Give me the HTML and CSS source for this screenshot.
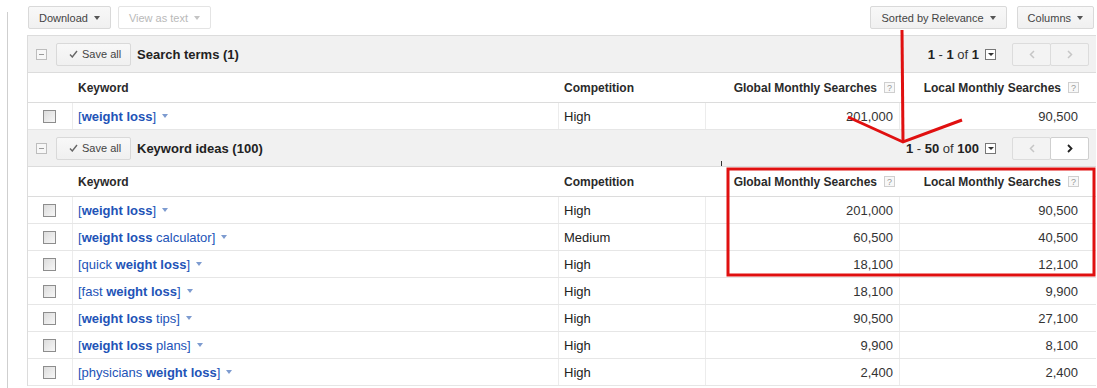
FILE: index.html
```html
<!DOCTYPE html>
<html lang="en">
<head>
<meta charset="UTF-8" />
<title>Keyword ideas</title>
<link rel="stylesheet" href="styles.css">
</head>
<body>
<div class="page">
  <div class="rail"></div>
  <div class="main">
    <!-- toolbar -->
    <div class="toolbar">
      <div class="tools">
        <button class="btn">Download <span class="caret"></span></button>
        <button class="btn off">View as text <span class="caret"></span></button>
      </div>
      <div class="tools wide">
        <button class="btn">Sorted by Relevance <span class="caret"></span></button>
        <button class="btn">Columns <span class="caret"></span></button>
      </div>
    </div>

    <div class="panel">
      <!-- search terms -->
      <div class="band">
        <span class="fold"><span></span></span>
        <button class="btn save"><svg width="9" height="8" viewBox="0 0 9 8"><path d="M1 4.5 L3.3 7 L8 1" fill="none" stroke="#666" stroke-width="1.4"/></svg>Save all</button>
        <span class="title">Search terms (1)</span>
        <div class="pager">
          <span class="count"><b>1</b> - <b>1</b> of <b>1</b></span>
          <span class="dd"></span>
          <span class="pbtn prev"><svg width="6" height="9" viewBox="0 0 6 9"><path d="M5 1 L1.5 4.5 L5 8" fill="none" stroke="#c6c6c6" stroke-width="1.5"/></svg></span>
          <span class="pbtn next"><svg width="6" height="9" viewBox="0 0 6 9"><path d="M1 1 L4.5 4.5 L1 8" fill="none" stroke="#c6c6c6" stroke-width="1.5"/></svg></span>
        </div>
      </div>
      <div class="row head">
        <div class="cell"></div>
        <div class="cell">Keyword</div>
        <div class="cell">Competition</div>
        <div class="cell num">Global Monthly Searches <span class="help">?</span></div>
        <div class="cell num last">Local Monthly Searches <span class="help">?</span></div>
      </div>
      <div class="row">
        <div class="cell"><span class="check"></span></div>
        <div class="cell"><a class="kw">[<b>weight loss</b>]</a><span class="kcaret"></span></div>
        <div class="cell">High</div>
        <div class="cell num">201,000</div>
        <div class="cell num last">90,500</div>
      </div>

      <!-- keyword ideas -->
      <div class="band">
        <span class="fold"><span></span></span>
        <button class="btn save"><svg width="9" height="8" viewBox="0 0 9 8"><path d="M1 4.5 L3.3 7 L8 1" fill="none" stroke="#666" stroke-width="1.4"/></svg>Save all</button>
        <span class="title">Keyword ideas (100)</span>
        <div class="pager">
          <span class="count"><b>1</b> - <b>50</b> of <b>100</b></span>
          <span class="dd"></span>
          <span class="pbtn prev"><svg width="6" height="9" viewBox="0 0 6 9"><path d="M5 1 L1.5 4.5 L5 8" fill="none" stroke="#c6c6c6" stroke-width="1.5"/></svg></span>
          <span class="pbtn next on"><svg width="6" height="9" viewBox="0 0 6 9"><path d="M1 1 L4.5 4.5 L1 8" fill="none" stroke="#222" stroke-width="1.8"/></svg></span>
        </div>
      </div>
      <div class="row head">
        <div class="cell"></div>
        <div class="cell">Keyword</div>
        <div class="cell">Competition</div>
        <div class="cell num">Global Monthly Searches <span class="help">?</span></div>
        <div class="cell num last">Local Monthly Searches <span class="help">?</span></div>
      </div>
      <div class="row">
        <div class="cell"><span class="check"></span></div>
        <div class="cell"><a class="kw">[<b>weight loss</b>]</a><span class="kcaret"></span></div>
        <div class="cell">High</div>
        <div class="cell num">201,000</div>
        <div class="cell num last">90,500</div>
      </div>
      <div class="row">
        <div class="cell"><span class="check"></span></div>
        <div class="cell"><a class="kw">[<b>weight loss</b> calculator]</a><span class="kcaret"></span></div>
        <div class="cell">Medium</div>
        <div class="cell num">60,500</div>
        <div class="cell num last">40,500</div>
      </div>
      <div class="row">
        <div class="cell"><span class="check"></span></div>
        <div class="cell"><a class="kw">[quick <b>weight loss</b>]</a><span class="kcaret"></span></div>
        <div class="cell">High</div>
        <div class="cell num">18,100</div>
        <div class="cell num last">12,100</div>
      </div>
      <div class="row">
        <div class="cell"><span class="check"></span></div>
        <div class="cell"><a class="kw">[fast <b>weight loss</b>]</a><span class="kcaret"></span></div>
        <div class="cell">High</div>
        <div class="cell num">18,100</div>
        <div class="cell num last">9,900</div>
      </div>
      <div class="row">
        <div class="cell"><span class="check"></span></div>
        <div class="cell"><a class="kw">[<b>weight loss</b> tips]</a><span class="kcaret"></span></div>
        <div class="cell">High</div>
        <div class="cell num">90,500</div>
        <div class="cell num last">27,100</div>
      </div>
      <div class="row">
        <div class="cell"><span class="check"></span></div>
        <div class="cell"><a class="kw">[<b>weight loss</b> plans]</a><span class="kcaret"></span></div>
        <div class="cell">High</div>
        <div class="cell num">9,900</div>
        <div class="cell num last">8,100</div>
      </div>
      <div class="row">
        <div class="cell"><span class="check"></span></div>
        <div class="cell"><a class="kw">[physicians <b>weight loss</b>]</a><span class="kcaret"></span></div>
        <div class="cell">High</div>
        <div class="cell num">2,400</div>
        <div class="cell num last">2,400</div>
      </div>
    </div>
  </div>

  <!-- red hand-drawn marks on top of the screenshot -->
  <svg class="marks" width="1097" height="388" viewBox="0 0 1097 388">
    <path d="M902 30 L903 142" fill="none" stroke="#e01010" stroke-width="3"/>
    <path d="M848 117 L903 142 L962 120" fill="none" stroke="#e01010" stroke-width="3"/>
    <rect x="728" y="169" width="366" height="106" fill="none" stroke="#e01010" stroke-width="3"/>
    <path d="M721.5 161 V166" stroke="#333" stroke-width="1"/>
  </svg>
</div>
</body>
</html>
```

FILE: styles.css
```css
body {
  margin: 0;
  font-family: "Liberation Sans", Arial, sans-serif;
  font-size: 13px;
  color: #222;
  background: #fff;
}
.page {
  position: relative;
  display: flex;
  height: 388px;
  overflow: hidden;
}
.rail {
  flex: none;
  width: 7px;
  margin-top: 12px;
  border-right: 1px solid #cfcfcf;
}
.main {
  flex: 1;
  margin-left: 19px;
  margin-right: 1px;
}
.toolbar {
  display: flex;
  justify-content: space-between;
  height: 35px;
  padding: 6px 2px 0 1px;
  box-sizing: border-box;
}
.tools {
  display: flex;
  gap: 7px;
}
.tools.wide {
  gap: 10px;
}
.btn {
  display: inline-flex;
  align-items: center;
  gap: 6px;
  height: 23px;
  padding: 0 10px;
  box-sizing: border-box;
  border: 1px solid #d9d9d9;
  border-radius: 2px;
  background: linear-gradient(#f8f8f8, #f0f0f0);
  font-family: "Liberation Sans", Arial, sans-serif;
  font-size: 11px;
  color: #444;
}
.caret {
  width: 0;
  height: 0;
  border-left: 3.5px solid transparent;
  border-right: 3.5px solid transparent;
  border-top: 4px solid #555;
}
.btn.off {
  background: #fff;
  border-color: #e4e4e4;
  color: #b9b9b9;
}
.btn.off .caret {
  border-top-color: #c4c4c4;
}
.panel {
  border-top: 1px solid #dcdcdc;
  border-left: 1px solid #dcdcdc;
}
.band {
  display: flex;
  align-items: center;
  height: 37px;
  padding: 0 7px 0 8px;
  box-sizing: border-box;
  background: #f1f1f1;
  border-bottom: 1px solid #dcdcdc;
}
.fold {
  display: flex;
  align-items: center;
  justify-content: center;
  width: 11px;
  height: 11px;
  box-sizing: border-box;
  border: 1px solid #bdbdbd;
  background: #f7f7f7;
  margin-right: 9px;
}
.fold span {
  width: 5px;
  height: 1px;
  background: #9a9a9a;
}
.btn.save {
  width: 75px;
  gap: 4px;
  padding: 0 0 0 12px;
}
.title {
  margin-left: 6px;
  font-weight: bold;
  font-size: 13px;
  color: #222;
}
.pager {
  display: flex;
  align-items: center;
  margin-left: auto;
}
.count {
  font-size: 13px;
  color: #333;
}
.count b {
  color: #222;
}
.dd {
  width: 11px;
  height: 11px;
  box-sizing: border-box;
  border: 1px solid #777;
  background: #fff;
  margin-left: 6px;
  display: flex;
  align-items: center;
  justify-content: center;
}
.dd::after {
  content: "";
  border-left: 3px solid transparent;
  border-right: 3px solid transparent;
  border-top: 3px solid #333;
}
.pbtn {
  display: flex;
  align-items: center;
  justify-content: center;
  width: 39px;
  height: 23px;
  box-sizing: border-box;
  border: 1px solid #dcdcdc;
  background: #f3f3f3;
  border-radius: 2px;
}
.pbtn.prev {
  margin-left: 16px;
}
.pbtn.next {
  margin-left: -1px;
}
.pbtn.on {
  background: #fff;
  border-color: #cfcfcf;
}
.row {
  display: grid;
  grid-template-columns: 44px 486px 147px 194px 1fr;
  height: 27px;
  box-sizing: border-box;
  border-bottom: 1px solid #e6e6e6;
}
.cell {
  display: flex;
  align-items: center;
  padding: 0 5px;
  border-left: 1px solid #ececec;
  white-space: nowrap;
}
.cell:first-child {
  border-left: none;
  padding-left: 15px;
}
.cell.num {
  justify-content: flex-end;
  padding-right: 6px;
  color: #333;
}
.cell.num.last {
  padding-right: 18px;
}
.row.head {
  height: 30px;
  border-bottom-color: #dcdcdc;
  font-size: 12px;
  font-weight: bold;
}
.row.head .cell {
  border-left-color: transparent;
  color: #2a2a2a;
}
.row.head .cell.num {
  padding-right: 4px;
}
.row.head .cell.num.last {
  padding-right: 17px;
}
.help {
  display: inline-flex;
  align-items: center;
  justify-content: center;
  width: 11px;
  height: 11px;
  box-sizing: border-box;
  margin-left: 7px;
  border: 1px solid #cfcfcf;
  background: #f8f8f8;
  font-size: 9px;
  font-weight: normal;
  color: #999;
}
.check {
  width: 13px;
  height: 13px;
  box-sizing: border-box;
  border: 1px solid #8d8d8d;
  background: linear-gradient(135deg, #dcdcdc, #f7f7f7);
}
.kw {
  color: #2253b7;
  text-decoration: none;
}
.kcaret {
  width: 0;
  height: 0;
  margin-left: 6px;
  border-left: 3.5px solid transparent;
  border-right: 3.5px solid transparent;
  border-top: 4px solid #7d9bd0;
}
.marks {
  position: absolute;
  left: 0;
  top: 0;
  pointer-events: none;
}
```
